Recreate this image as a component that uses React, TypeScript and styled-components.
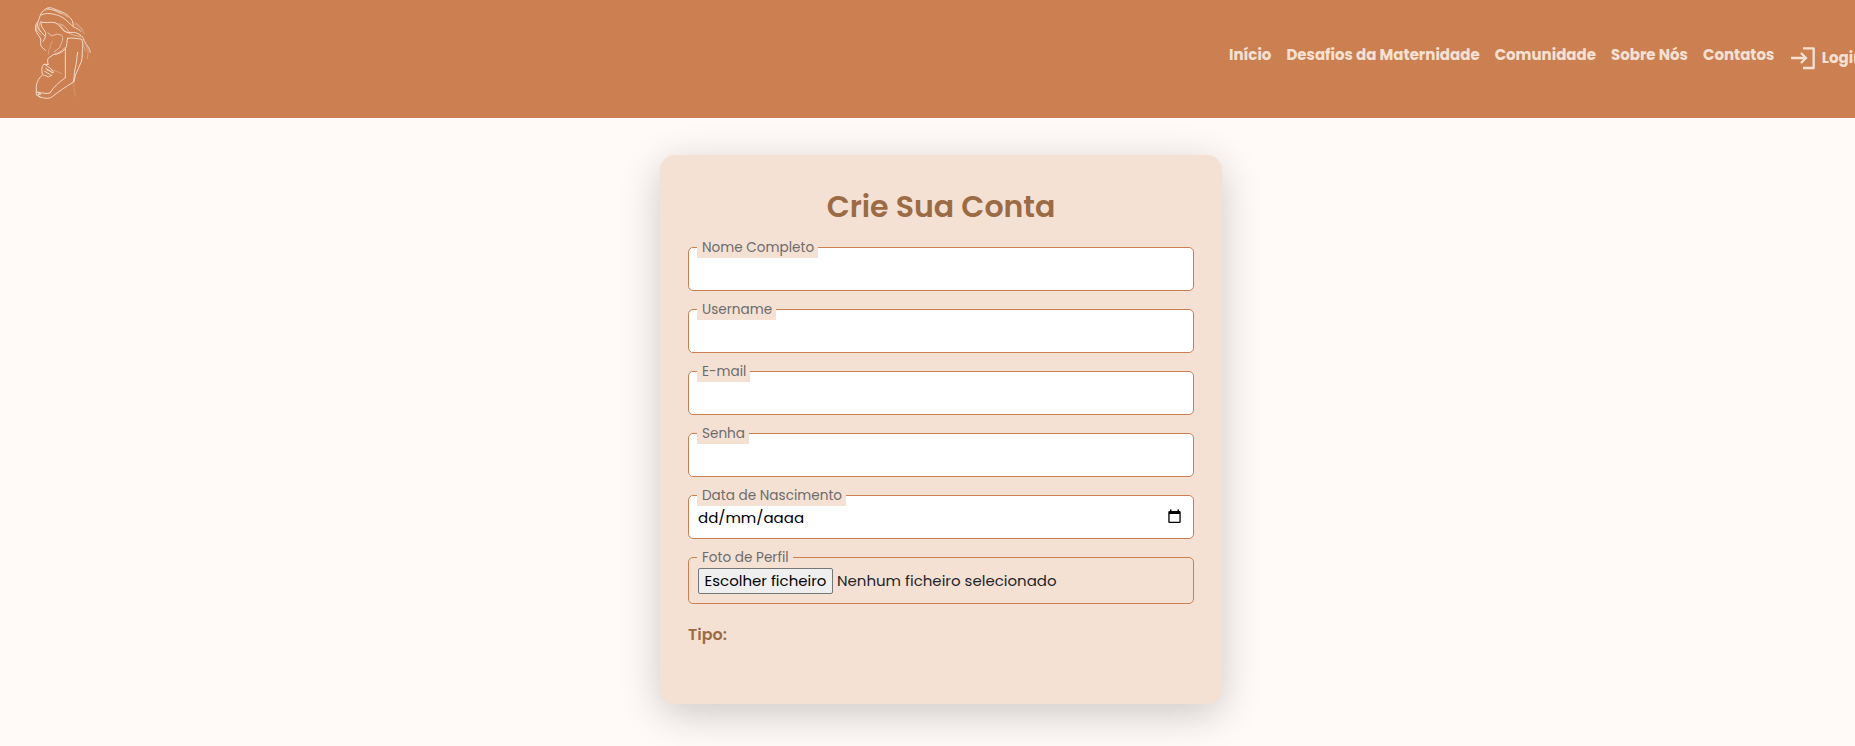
import React from 'react';
import styled, { createGlobalStyle } from 'styled-components';

const clay = '#cc8052';
const sand = '#f5e1d4';
const brown = '#9b6b45';

const GlobalStyle = createGlobalStyle`
  *, *::before, *::after { box-sizing: border-box; }
  html { overflow: hidden; }
  body {
    margin: 0;
    overflow: hidden;
    background: #fffaf7;
    color: #212529;
    font-family: Poppins, Inter, sans-serif;
    font-size: 15px;
  }
`;

const Page = styled.div`
  height: 746px;
  overflow: hidden;
`;

const Header = styled.header`
  display: flex;
  justify-content: space-between;
  height: 118px;
  padding-left: 20px;
  background: ${clay};
  overflow: hidden;
`;

const Logo = styled.svg`
  flex: none;
  width: 90px;
  height: 118px;
`;

const Nav = styled.nav`
  display: flex;
  align-items: flex-start;
  gap: 15px;
  width: 626px;
  padding-top: 43px;
`;

const NavLink = styled.a`
  flex: none;
  color: ${sand};
  font-size: 15px;
  font-weight: 700;
  line-height: 23px;
  white-space: nowrap;
`;

const LoginLink = styled(NavLink)`
  display: flex;
  align-items: center;
  gap: 4.5px;
  line-height: 30px;
`;

const LoginIcon = styled.svg`
  width: 28px;
  height: 28px;
`;

const Main = styled.main`
  display: flex;
  justify-content: center;
  padding: 37px 0 0 27px;
`;

const Card = styled.form`
  width: 562px;
  height: 549px;
  padding: 29px 28px;
  border-radius: 15px;
  background: ${sand};
  box-shadow: 0 10px 40px rgba(0, 0, 0, 0.2);
`;

const Title = styled.h1`
  margin: 0 0 18px;
  color: ${brown};
  font-size: 30px;
  font-weight: 600;
  line-height: 45px;
  text-align: center;
`;

const Field = styled.div`
  position: relative;
  margin-bottom: 18px;
`;

const Label = styled.label`
  position: absolute;
  top: -10px;
  left: 9px;
  padding: 0 4px 0 5px;
  background: ${sand};
  color: #6c6c6c;
  font-size: 13.6px;
  line-height: 21px;
  white-space: nowrap;
`;

const Box = styled.div<{ $clear?: boolean }>`
  display: flex;
  align-items: center;
  height: ${p => (p.$clear ? 47 : 44)}px;
  padding: 0 9px;
  border: 1px solid ${clay};
  border-radius: 5px;
  background: ${p => (p.$clear ? 'transparent' : '#fff')};
`;

const TextInput = styled.input`
  display: block;
  width: 100%;
  height: 44px;
  padding: 0 9px;
  border: 1px solid ${clay};
  border-radius: 5px;
  outline: none;
  background: #fff;
  font: inherit;
`;

const DateText = styled.span`
  flex: 1;
  color: #000;
`;

const CalendarIcon = styled.svg`
  width: 15px;
  height: 15px;
  margin: -1px 2px 0 0;
`;

const FileButton = styled.button`
  height: 26px;
  margin: 0 4px 0 0;
  padding: 0 5.5px;
  border: 1px solid #767676;
  border-radius: 2px;
  background: #efefef;
  color: #000;
  font: inherit;
  line-height: 24px;
`;

const TypeLabel = styled.p`
  margin: 0;
  color: ${brown};
  font-size: 16px;
  font-weight: 600;
  line-height: 25px;
`;

const links = ['Início', 'Desafios da Maternidade', 'Comunidade', 'Sobre Nós', 'Contatos'];
const textFields = [
  { label: 'Nome Completo', type: 'text' },
  { label: 'Username', type: 'text' },
  { label: 'E-mail', type: 'email' },
  { label: 'Senha', type: 'password' },
];

export default function App() {
  return (
    <Page>
      <GlobalStyle />
      <Header>
        <Logo viewBox="0 0 270 354" fill="none" stroke="#f2dac9" strokeWidth="3" strokeLinecap="round" strokeLinejoin="round">
          {/* hair */}
          <path d="M47 92C45 78 48 70 54 65C60 52 61 37 72 31C80 23 89 21 98 25L123 35C139 40 149 50 157 62C159 68 159 73 160 78" />
          <path d="M64 45C80 36 99 42 115 46C130 51 140 62 155 76C161 83 172 83 183 94" />
          <path d="M77 30C94 24 108 33 118 39C129 40 137 47 143 51M83 25C103 31 111 34 123 39" strokeWidth="2" />
          <path d="M61 66C77 70 91 65 105 68C120 74 124 88 133 94C142 100 158 95 170 99C181 103 187 109 191 116C193 130 206 137 211 157" />
          <path d="M116 70C124 78 128 88 139 96C151 101 162 108 182 109M122 72C133 77 142 87 146 94" strokeWidth="2" />
          <path d="M160 70C174 76 186 84 193 101M167 68C179 77 184 83 188 91" stroke="#e1b394" strokeWidth="2" />
          <path d="M54 66C49 79 56 91 65 98L75 108M63 70C62 83 73 88 77 98C78 109 73 119 69 124M47 91C49 101 58 107 62 117C63 124 60 132 64 140L76 151" />
          <path d="M60 68C55 79 55 88 64 96M50 75C45 87 54 98 63 105" strokeWidth="2" />
          {/* face and neck */}
          <path d="M84 99L96 108L109 102L124 105C131 113 127 121 125 128C121 134 122 141 114 147L103 155" stroke="#e7c0a5" />
          <path d="M88 103C94 111 105 104 112 103M97 124C91 130 93 140 89 146C84 150 87 156 85 163" stroke="#e1b394" strokeWidth="2" />
          <path d="M143 114C139 126 143 136 136 146C128 157 113 163 100 164L87 173C79 179 85 186 84 194" />
          <path d="M134 143C125 156 115 158 104 162" strokeWidth="2" />
          {/* arm and back */}
          <path d="M143 115C156 112 168 116 184 117C191 129 187 142 187 153C187 169 187 184 178 198C174 210 169 217 166 226L162 246" />
          <path d="M136 147V233M173 157C170 174 170 191 165 207C162 220 164 235 159 247C137 260 119 273 99 288C90 297 75 296 61 291L49 284" />
          <path d="M188 119C202 133 197 142 204 151C205 160 203 166 202 176M191 131C190 141 196 147 196 154" stroke="#e1b394" strokeWidth="2" />
          {/* hand and belly */}
          <path d="M84 193L71 193C64 200 65 213 67 223C70 228 78 224 81 230C88 232 90 227 95 226M76 194C83 201 92 203 98 213C103 215 99 221 95 218M77 205L94 215M74 214L91 224M81 210C87 209 90 216 99 218" />
          <path d="M98 210C108 212 115 217 125 221" stroke="#e1b394" strokeWidth="2" />
          <path d="M67 225C55 235 47 252 49 267V284L61 293M136 233C117 246 100 262 90 279C79 283 66 278 52 276M53 278L63 282L55 284" />
          <path d="M160 251C162 264 163 275 166 288" stroke="#dba482" strokeWidth="2" strokeDasharray="9 5" />
        </Logo>
        <Nav>
          {links.map(link => (
            <NavLink key={link}>{link}</NavLink>
          ))}
          <LoginLink>
            <LoginIcon viewBox="0 0 84 84" fill="none" stroke={sand} strokeWidth="7">
              <path d="M42 13H74V72H42" strokeLinejoin="round" />
              <path d="M6 42H52M36 27L51 42L36 57" />
            </LoginIcon>
            Login
          </LoginLink>
        </Nav>
      </Header>
      <Main>
        <Card>
          <Title>Crie Sua Conta</Title>
          {textFields.map(field => (
            <Field key={field.label}>
              <TextInput type={field.type} aria-label={field.label} />
              <Label>{field.label}</Label>
            </Field>
          ))}
          <Field>
            <Box>
              <DateText>dd/mm/aaaa</DateText>
              <CalendarIcon viewBox="0 0 15 15">
                <path fill="#000" fillRule="evenodd" d="M3 0.5h1.5v1.5h6V0.5H12v1.5h.5a1.2 1.2 0 0 1 1.2 1.2v9.6a1.2 1.2 0 0 1-1.2 1.2h-10a1.2 1.2 0 0 1-1.2-1.2V3.2A1.2 1.2 0 0 1 2.5 2H3ZM2.6 5v7.7h9.8V5Z" />
              </CalendarIcon>
            </Box>
            <Label>Data de Nascimento</Label>
          </Field>
          <Field>
            <Box $clear>
              <FileButton type="button">Escolher ficheiro</FileButton>
              <span>Nenhum ficheiro selecionado</span>
            </Box>
            <Label>Foto de Perfil</Label>
          </Field>
          <TypeLabel>Tipo:</TypeLabel>
        </Card>
      </Main>
    </Page>
  );
}
